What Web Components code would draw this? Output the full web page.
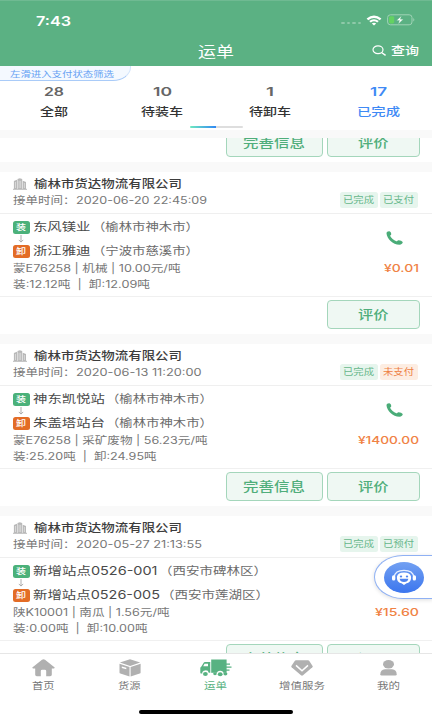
<!DOCTYPE html>
<html lang="zh-CN">
<head>
<meta charset="utf-8">
<title>运单</title>
<style>
html,body{margin:0;padding:0}
body{width:432px;height:720px;overflow:hidden;background:#fff;font-family:Inter,"Noto Sans CJK SC",sans-serif;color:#555}
</style>
</head>
<body>
<waybill-app></waybill-app>
<script>
class Base extends HTMLElement{
  constructor(){super();this.attachShadow({mode:'open'});}
  a(n,d=''){return this.hasAttribute(n)?this.getAttribute(n):d;}
}
/* One line of text stretched to an exact width: w = width, s = font size, b = weight, c = colour, dy = baseline nudge */
customElements.define('fit-text',class extends Base{
  connectedCallback(){
    const w=+this.a('w'),s=+this.a('s','10');
    this.shadowRoot.innerHTML=`<style>:host{display:inline-block;flex:none;width:${w}px;height:${s*1.4}px;line-height:${s*1.4}px;font-size:${s}px;font-weight:${this.a('b','400')};${this.hasAttribute('c')?`color:${this.a('c')};`:''}white-space:nowrap;text-align:left}
    span{display:inline-block;transform-origin:0 50%;vertical-align:top}</style><span></span>`;
    const sp=this.shadowRoot.querySelector('span');
    sp.textContent=this.a('t');
    sp.style.transform=`translateY(${this.a('dy','0')}px) scaleX(${w/sp.getBoundingClientRect().width})`;
  }
});
const ICONS={
  wifi:[16,11,'<path d="M.6 3.6Q8-2.4 15.4 3.6L13.8 5.2Q8 .6 2.2 5.2Z"/><path d="M3.2 6.1Q8 2.2 12.8 6.1L11.2 7.6Q8 5.1 4.8 7.6Z"/><path d="M5.8 8.5Q8 6.8 10.2 8.5L8 10.5Z"/>'],
  battery:[28,12,'<rect x=".6" y=".8" width="24.4" height="10" rx="2.8" fill="none" stroke="#a0d3b6" stroke-width="1"/><path d="M26.3 4Q28.4 5.8 26.3 7.6Z" fill="#a0d3b6"/><rect x="2" y="2.2" width="5.2" height="7.2" rx="1.4" fill="#64d262"/><path d="M14.4 1.9 9.6 6.5H12.5L11.3 9.9 16.3 5.2H13.3Z" stroke="#5bb183" stroke-width=".3"/>'],
  search:[15,11,'<g fill="none" stroke="#fff"><ellipse cx="6" cy="4.7" rx="5" ry="3.9" stroke-width="1.2"/><path d="M9.5 7.5 13.6 10.4" stroke-width="1.4"/></g>'],
  building:[14,12,'<path d="M0 10.8H14V11.8H0Z"/><path d="M.9 3 4 1.8V11H.9Z"/><path d="M4.5 1 6.8 .2 9.2 1V11H4.5Z"/><path d="M9.7 2.7 13 4V11H9.7Z"/><path d="M6.1 2.8V10M7.7 2.8V10M2.5 4V10M11.4 5V10" stroke="#ececec" stroke-width=".6"/>'],
  down:[6,8,'<path d="M3 0V6.8M.8 4.9 3 7.1 5.2 4.9" fill="none" stroke="#999" stroke-width=".8"/>'],
  phone:[17,14,'<path d="M.5 2.2C.4.9 2 .1 3.4.3 4.6.5 5.6 2.6 5.2 3.6 5 4.3 4 4.5 4.2 5.1 5.2 7.3 7.6 9.3 10.4 10.2 11.2 10.4 11.5 9.4 12.4 9.2 13.7 9 16.3 10 16.7 11 17 12.3 15.3 13.6 13.5 13.7 6.7 13.6.8 7.6.5 2.2Z"/>'],
  home:[23,18,'<path d="M11.5.2Q12.2.2 13 .8L22.4 8.2Q23.2 9.2 22 9.4H19.8V15.8Q19.8 17.2 18.2 17.2H14.2V12Q14.2 10.7 12.8 10.7H10.2Q8.8 10.7 8.8 12V17.2H4.8Q3.2 17.2 3.2 15.8V9.4H1Q-.2 9.2.6 8.2L10 .8Q10.8.2 11.5.2Z"/>'],
  box:[22,18,'<path d="M11 .3 21.2 3.6 11.2 7 .9 3.6Z"/><path d="M.5 4.7 10.5 8.1V17.4L1.4 14.5Q.5 14.2.5 13.4Z"/><path d="M21.6 4.7 11.6 8.1V17.4L20.7 14.5Q21.6 14.2 21.6 13.4Z"/><path d="M2.8 7.4 7.3 8.8V10.3L2.8 8.9Z" fill="#fff"/>'],
  truck:[32,18,'<path d="M11.2.5H26.6V13.8H11.2Z"/><path d="M3.4 4.3Q3.8 3 5.4 3H10.3V13.8H8.7A3.2 2.7 0 0 0 2.3 14.4H.7Q.3 14.4.3 13.6V8.8Q.5 8 1.4 7.4Z"/><path d="M4.5 4.7H8V7.3H3.2Z" fill="#fff"/><path d="M26 4.6H30V5.8H26ZM26 7.6H31.5V8.8H26ZM26 10.6H29.5V11.8H26Z"/><ellipse cx="5.4" cy="15" rx="2.4" ry="2"/><ellipse cx="20.2" cy="14.4" rx="3.2" ry="2.6" fill="#fff"/><ellipse cx="20.2" cy="15.2" rx="2.4" ry="2"/><ellipse cx="25.4" cy="14.8" rx="2" ry="1.6"/><ellipse cx="15" cy="14.8" rx="1.8" ry="1.4"/>'],
  gem:[22,16,'<path d="M5 .2H17Q17.8.2 18.3.9L21.6 6Q22 6.7 21.4 7.3L12 15.3Q11 16 10 15.3L.6 7.3Q0 6.7.4 6L3.7.9Q4.2.2 5 .2Z"/><path d="M5 5.4 11 10.8 17 5.4" fill="none" stroke="#fff" stroke-width="1.5"/>'],
  person:[17,16,'<ellipse cx="8.5" cy="4.2" rx="5.5" ry="4.2"/><path d="M5 9.2H12Q16.7 9.6 16.7 14.2 16.7 15.6 15.4 15.6H1.6Q.3 15.6.3 14.2.3 9.6 5 9.2Z"/>'],
  face:[40,31,'<defs><linearGradient id="g" x1="0" y1="0" x2="0" y2="1"><stop offset="0" stop-color="#72a0f2"/><stop offset="1" stop-color="#3c76ee"/></linearGradient></defs><ellipse cx="20" cy="15.5" rx="20" ry="15.4" fill="url(#g)"/><path d="M10.2 15Q11 8.4 20 8.4T29.8 15" fill="none" stroke="#e9f1ff" stroke-width="1.2"/><rect x="8" y="13.3" width="3.3" height="5.2" rx="1.5"/><rect x="28.7" y="13.3" width="3.3" height="5.2" rx="1.5"/><path d="M13 14.5Q13.8 10.5 20 10.5T27 14.5C27.4 18 26 20.8 22.5 21.2L20 23 17.5 21.2C14 20.8 12.6 18 13 14.5Z"/><ellipse cx="17" cy="14.5" rx="1.2" ry=".9" fill="#4e83ef"/><ellipse cx="23" cy="14.5" rx="1.2" ry=".9" fill="#4e83ef"/><path d="M15.7 16.8H24.3Q23.8 20 20 20T15.7 16.8Z" fill="#4e83ef"/>']
};
customElements.define('ui-icon',class extends Base{
  connectedCallback(){const [w,h,m]=ICONS[this.a('name')];
    this.shadowRoot.innerHTML=`<style>:host{display:block;flex:none;width:${w}px;height:${h}px}svg{display:block}</style><svg width="${w}" height="${h}" viewBox="0 0 ${w} ${h}" fill="currentColor">${m}</svg>`;}
});
customElements.define('app-header',class extends Base{
  connectedCallback(){this.shadowRoot.innerHTML=`<style>
  :host{display:flex;flex-direction:column;flex:none;height:66px;background:#5bb183;color:#fff;box-sizing:border-box;border-top:1px solid #6fba92}
  .s{display:flex;height:35px;align-items:center;padding:3px 17px 0 36px;box-sizing:border-box}
  .d{margin-left:auto;display:flex;gap:2px;margin-right:5px;padding-top:6px}.d i{width:3.4px;height:2.6px;border-radius:50%;background:#8fcaa9}
  .b{margin-left:5px}
  .n{display:grid;grid-template-columns:1fr auto 1fr;align-items:center;height:30px}
  .q{display:flex;justify-content:flex-end;align-items:center;gap:4px;padding-right:13px}</style>
  <div class="s"><fit-text t="7:43" w="35" s="13.4" b="600" dy=".5"></fit-text><div class="d"><i></i><i></i><i></i><i></i></div><ui-icon name="wifi"></ui-icon><ui-icon class="b" name="battery"></ui-icon></div>
  <div class="n"><span></span><fit-text t="运单" w="36" s="14.4" dy=".7"></fit-text><div class="q"><ui-icon name="search"></ui-icon><fit-text t="查询" w="28" s="11.4" b="500" dy="1"></fit-text></div></div>`;}
});
customElements.define('filter-tabs',class extends Base{
  connectedCallback(){
    const T=[['28',20,'全部',28],['10',19,'待装车',42],['1',8,'待卸车',42],['17',17,'已完成',43]];
    this.shadowRoot.innerHTML=`<style>
  :host{display:block;position:relative;flex:none;height:64px;background:#fff}
  .hint{position:absolute;left:0;top:0;width:131px;height:14.5px;box-sizing:border-box;border-bottom:1px solid #a9cbf8;border-right:1px solid #d2e4fb;border-radius:0 0 18px 0/0 0 14px 0;background:#f4f9ff;padding:1.5px 0 0 10px;line-height:0}
  .t{display:grid;grid-template-columns:repeat(4,1fr);padding-top:17px}
  .c{display:flex;flex-direction:column;align-items:center;color:#333;gap:1.5px}.c fit-text:first-child{color:#666}
  .c.on,.c.on fit-text:first-child{color:#3f8af5}
  .bar{position:absolute;left:189.5px;top:59.8px;width:53.5px;height:2.2px;border-radius:1px;background:linear-gradient(90deg,#6fe9c0,#2f86f5 50%,#dedede 50%)}</style>
  <div class="t">${T.map((x,i)=>`<div class="c${i==3?' on':''}"><fit-text t="${x[0]}" w="${x[1]}" s="12.4" b="600" dy=".4"></fit-text><fit-text t="${x[2]}" w="${x[3]}" s="11.5" b="500" dy="1.5"></fit-text></div>`).join('')}</div>
  <div class="hint"><fit-text t="左滑进入支付状态筛选" w="104" s="8.3" c="#68a2f3" dy=".5"></fit-text></div><div class="bar"></div>`;}
});
customElements.define('order-button',class extends Base{
  connectedCallback(){const l=this.a('wide')==='1';
    this.shadowRoot.innerHTML=`<style>:host{display:flex;box-sizing:border-box;width:${l?96.5:92.5}px;height:29.5px;border:1px solid #a4d6bb;border-radius:4px;background:#eff8f3;color:#50ae7b;align-items:center;justify-content:center}</style><fit-text t="${l?'完善信息':'评价'}" w="${l?62:30.5}" s="12.6" b="500" dy="1"></fit-text>`;}
});
customElements.define('order-actions',class extends Base{
  connectedCallback(){this.shadowRoot.innerHTML=`<style>:host{display:flex;box-sizing:border-box;flex:none;height:38px;border-top:1px solid #f0f0f0;background:#fff;justify-content:flex-end;gap:4.5px;padding:3px 12.5px 0 0}</style>${this.hasAttribute('full')?'<order-button wide="1"></order-button>':''}<order-button></order-button>`;}
});
customElements.define('status-tag',class extends Base{
  connectedCallback(){const o=this.hasAttribute('warn');
    this.shadowRoot.innerHTML=`<style>:host{display:flex;width:37.5px;height:16px;border-radius:2.5px;align-items:center;justify-content:center;background:${o?'#fdede2':'#e6f5ed'};color:${o?'#ee7f43':'#66b78b'}}</style><fit-text t="${this.a('t')}" w="31" s="8.6" dy=".9"></fit-text>`;}
});
const ORDERS=[
 {time:['2020-06-20 22:45:09',131],tag:['已支付',0],a:['东风镁业',57.5,'（榆林市神木市）',107],b:['浙江雅迪',57.5,'（宁波市慈溪市）',107],m:['蒙E76258 | 机械 | 10.00元/吨',167.5],n:['装:12.12吨 \u00a0|\u00a0 卸:12.09吨',137],p:['¥0.01',35],call:1,full:0},
 {time:['2020-06-13 11:20:00',125.5],tag:['未支付',1],a:['神东凯悦站',72,'（榆林市神木市）',107],b:['朱盖塔站台',72,'（榆林市神木市）',107],m:['蒙E76258 | 采矿废物 | 56.23元/吨',194.5],n:['装:25.20吨 \u00a0|\u00a0 卸:24.95吨',143.5],p:['¥1400.00',61],call:1,full:1},
 {time:['2020-05-27 21:13:55',126],tag:['已预付',0],a:['新增站点0526-001',124.5,'（西安市碑林区）',108],b:['新增站点0526-005',127,'（西安市莲湖区）',108],m:['陕K10001 | 南瓜 | 1.56元/吨',156.5],n:['装:0.00吨 \u00a0|\u00a0 卸:10.00吨',134.5],p:['¥15.60',44],call:0,full:1}
];
customElements.define('order-card',class extends Base{
  connectedCallback(){const o=ORDERS[+this.a('index')];
    const stop=(k,l,x)=>`<div class="r"><b class="${k}"><fit-text t="${l}" w="10" s="8" b="500" dy=".8"></fit-text></b><fit-text t="${x[0]}" w="${x[1]}" s="11.8" c="#4a4a4a"></fit-text><fit-text class="city" t="${x[2]}" w="${x[3]}" s="11" c="#6b6b6b" dy=".9"></fit-text></div>`;
    this.shadowRoot.innerHTML=`<style>
  :host{display:block;flex:none;background:#fff}
  .h{height:41px;display:flex;box-sizing:border-box;padding:4px 14.5px 0 13px;justify-content:space-between}
  .co{display:flex;align-items:center;height:17px;gap:7px;color:#b9b9b9}.tm{display:flex;height:15px;align-items:center;color:#777}
  .tags{display:flex;gap:2.3px;padding-top:16px}
  .body{height:83px;box-sizing:border-box;border-top:1px solid #efefef;display:flex;justify-content:space-between;padding:6px 13.3px 0 13px}
  .r{display:flex;align-items:center;height:15px}
  .r b{display:flex;width:16.5px;height:13px;border-radius:2.5px;align-items:center;justify-content:center;color:#fff;margin-right:3.5px}
  .g{background:#4bb17a}.o{background:#e36c26}.city{margin-left:1px}
  .dn{height:9px;padding:.5px 0 0 4.5px;box-sizing:border-box}
  .m{height:16px;display:flex;align-items:center;color:#777}.m.f{margin-top:2px}
  .side{display:flex;flex-direction:column;align-items:flex-end;color:#4aac78}
  .ph{height:14px;margin:11px 16px 15px 0}</style>
  <div class="h"><div><div class="co"><ui-icon name="building"></ui-icon><fit-text t="榆林市货达物流有限公司" w="148" s="11" b="500" c="#3c3c3c" dy=".9"></fit-text></div>
  <div class="tm"><fit-text t="接单时间：" w="62.5" s="10"></fit-text><fit-text t="${o.time[0]}" w="${o.time[1]}" s="10.2"></fit-text></div></div>
  <div class="tags"><status-tag t="已完成"></status-tag><status-tag t="${o.tag[0]}" ${o.tag[1]?'warn':''}></status-tag></div></div>
  <div class="body"><div>${stop('g','装',o.a)}<div class="dn"><ui-icon name="down" style="color:#999"></ui-icon></div>${stop('o','卸',o.b)}
  <div class="m f"><fit-text t="${o.m[0]}" w="${o.m[1]}" s="10.2" dy="-.3"></fit-text></div><div class="m"><fit-text t="${o.n[0]}" w="${o.n[1]}" s="10.2" dy="-.3"></fit-text></div></div>
  <div class="side"><div class="ph">${o.call?'<ui-icon name="phone"></ui-icon>':''}</div><fit-text t="${o.p[0]}" w="${o.p[1]}" s="10.8" b="500" c="#f08244" dy=".5"></fit-text></div></div>
  <order-actions ${o.full?'full':''}></order-actions>`;}
});
customElements.define('tab-bar',class extends Base{
  connectedCallback(){
    const T=[['home','首页',22.5],['box','货源',22.5],['truck','运单',23],['gem','增值服务',46],['person','我的',23]];
    this.shadowRoot.innerHTML=`<style>:host{display:flex;flex-direction:column;align-items:center;flex:none;height:67.5px;box-sizing:border-box;border-top:1.5px solid #e6e6e6;background:#fff;color:#b0b0b0}
  .t{display:grid;grid-template-columns:repeat(5,1fr);width:100%;height:55px}
  .c{display:flex;flex-direction:column;align-items:center;padding-top:5px}.i{height:19px;display:flex;align-items:center}.c fit-text{color:#777}
  .on,.on fit-text{color:#58b282}
  .bar{width:154px;height:4px;border-radius:2px;background:#000;margin-top:1px}</style>
  <div class="t">${T.map((x,i)=>`<div class="c${i==2?' on':''}"><div class="i"><ui-icon name="${x[0]}"></ui-icon></div><fit-text t="${x[1]}" w="${x[2]}" s="9.3" dy=".7"></fit-text></div>`).join('')}</div><div class="bar"></div>`;}
});
customElements.define('service-bubble',class extends Base{
  connectedCallback(){this.shadowRoot.innerHTML=`<style>:host{position:absolute;right:-1px;top:555px;width:59px;height:44px;box-sizing:border-box;border:1.2px solid #8fb1f4;border-right:0;border-radius:29px 0 0 29px/22px 0 0 22px;background:#fff;display:flex;align-items:center;padding-left:8.8px;color:#fff;box-shadow:0 1px 4px #0002}</style><ui-icon name="face"></ui-icon>`;}
});
customElements.define('waybill-app',class extends Base{
  connectedCallback(){this.shadowRoot.innerHTML=`<style>
  :host{display:flex;flex-direction:column;position:relative;width:432px;height:720px;overflow:hidden;background:#f9f9f9}
  .list{margin-top:8px;flex:1;min-height:0;overflow:hidden;display:flex;flex-direction:column;gap:10px}
  .first{margin-top:-14.5px}</style>
  <app-header></app-header><filter-tabs></filter-tabs>
  <div class="list"><order-actions class="first" full></order-actions>${ORDERS.map((_,i)=>`<order-card index="${i}"></order-card>`).join('')}</div>
  <tab-bar></tab-bar><service-bubble></service-bubble>`;}
});
</script>
</body>
</html>
